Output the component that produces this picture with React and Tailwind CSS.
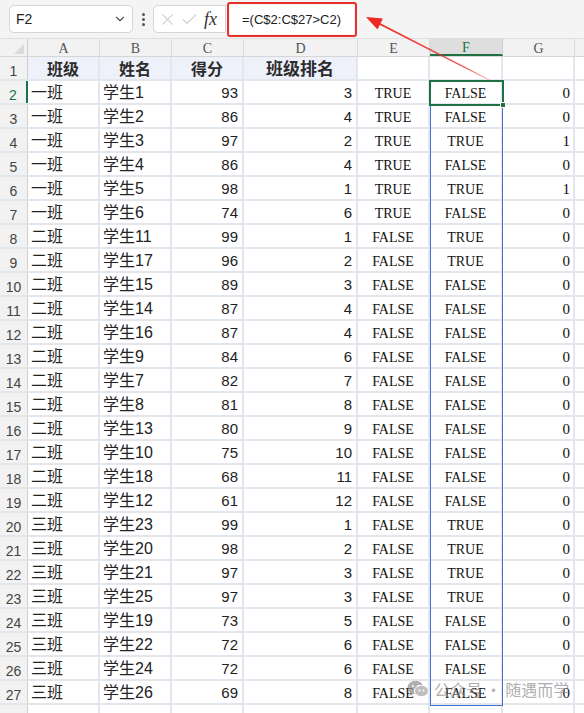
import { ChevronDown, X, Check } from "lucide-react";

const rows = [
  ["一班", "学生1", 93, 3, "TRUE", "FALSE", 0],
  ["一班", "学生2", 86, 4, "TRUE", "FALSE", 0],
  ["一班", "学生3", 97, 2, "TRUE", "TRUE", 1],
  ["一班", "学生4", 86, 4, "TRUE", "FALSE", 0],
  ["一班", "学生5", 98, 1, "TRUE", "TRUE", 1],
  ["一班", "学生6", 74, 6, "TRUE", "FALSE", 0],
  ["二班", "学生11", 99, 1, "FALSE", "TRUE", 0],
  ["二班", "学生17", 96, 2, "FALSE", "TRUE", 0],
  ["二班", "学生15", 89, 3, "FALSE", "FALSE", 0],
  ["二班", "学生14", 87, 4, "FALSE", "FALSE", 0],
  ["二班", "学生16", 87, 4, "FALSE", "FALSE", 0],
  ["二班", "学生9", 84, 6, "FALSE", "FALSE", 0],
  ["二班", "学生7", 82, 7, "FALSE", "FALSE", 0],
  ["二班", "学生8", 81, 8, "FALSE", "FALSE", 0],
  ["二班", "学生13", 80, 9, "FALSE", "FALSE", 0],
  ["二班", "学生10", 75, 10, "FALSE", "FALSE", 0],
  ["二班", "学生18", 68, 11, "FALSE", "FALSE", 0],
  ["二班", "学生12", 61, 12, "FALSE", "FALSE", 0],
  ["三班", "学生23", 99, 1, "FALSE", "TRUE", 0],
  ["三班", "学生20", 98, 2, "FALSE", "TRUE", 0],
  ["三班", "学生21", 97, 3, "FALSE", "TRUE", 0],
  ["三班", "学生25", 97, 3, "FALSE", "TRUE", 0],
  ["三班", "学生19", 73, 5, "FALSE", "FALSE", 0],
  ["三班", "学生22", 72, 6, "FALSE", "FALSE", 0],
  ["三班", "学生24", 72, 6, "FALSE", "FALSE", 0],
  ["三班", "学生26", 69, 8, "FALSE", "FALSE", 0],
];

const cell = "h-full shrink-0 border-r-2 border-[#e4e6ee] flex items-center";
const rowHead = "w-[28px] h-full shrink-0 bg-[#f2f2f2] border-r border-[#cfcfcf] flex justify-center pt-[4px] text-[14px] text-[#444]";
const serif = { fontFamily: "'Liberation Serif', serif" };

function ColumnHeader() {
  const letters = [
    ["A", "w-[72px]"],
    ["B", "w-[72px]"],
    ["C", "w-[72px]"],
    ["D", "w-[114px]"],
    ["E", "w-[72px]"],
  ];
  return (
    <div className="flex h-[18px] bg-[#f2f2f2] border-b border-[#d6d6d6] text-[14px] text-[#555] leading-none" style={serif}>
      <div className="w-[28px] shrink-0 border-r border-[#cfcfcf] relative">
        <div className="absolute right-[3px] bottom-[2px] w-0 h-0 border-l-[10px] border-l-transparent border-b-[10px] border-b-[#d9d9d9]" />
      </div>
      {letters.map(([l, w]) => (
        <div key={l} className={`${w} shrink-0 border-r border-[#dcdcdc] flex items-center justify-center pt-[2px]`}>{l}</div>
      ))}
      <div className="w-[73px] shrink-0 bg-[#dedede] border-r border-[#d0d0d0] border-b-2 border-b-[#1e7145] text-[#1e7145] flex items-center justify-center pt-[2px]">F</div>
      <div className="w-[72px] shrink-0 border-r border-[#dcdcdc] flex items-center justify-center pt-[2px]">G</div>
      <div className="flex-1" />
    </div>
  );
}

function DataRow({ n, r }) {
  const [cls, name, score, rank, e, f, g] = r;
  const active = n === 2;
  return (
    <div className="flex h-[24px] border-b-2 border-[#e4e6ee] text-[16px] text-[#222]">
      <div className={active ? "w-[28px] h-full shrink-0 bg-[#f2f2f2] border-r-2 border-[#1e7145] flex justify-center pt-[4px] text-[14px] text-[#1e7145]" : rowHead}>{n}</div>
      <div className={`${cell} w-[72px] pl-[3px] pt-[2px]`}>{cls}</div>
      <div className={`${cell} w-[72px] pl-[3px] pt-[2px]`}>{name}</div>
      <div className={`${cell} w-[72px] justify-end pr-[4px] pt-[2px] text-[15px]`}>{score}</div>
      <div className={`${cell} w-[114px] justify-end pr-[4px] pt-[2px] text-[15px]`}>{rank}</div>
      <div className={`${cell} w-[72px] justify-center text-[14px] pt-[3px] text-[#111]`} style={serif}>{e}</div>
      <div className={`${cell} w-[73px] justify-center text-[14px] pt-[3px] text-[#111]`} style={serif}>{f}</div>
      <div className={`${cell} w-[72px] justify-end pr-[3px] text-[15px] pt-[3px] text-[#111]`} style={serif}>{g}</div>
      <div className="flex-1" />
    </div>
  );
}

export default function App() {
  return (
    <div className="relative w-[584px] h-[713px] overflow-hidden bg-white" style={{ fontFamily: "'Liberation Sans', 'Noto Sans CJK SC', sans-serif" }}>
      {/* Formula bar */}
      <div className="h-[39px] bg-[#f4f4f4] border-b border-[#dedede] flex items-start pt-[5px] pl-[9px]">
        <div className="w-[124px] h-[28px] bg-white border border-[#d6d6d6] rounded-[5px] flex items-center justify-between pl-[6px] pr-[5px] text-[14px] text-[#222]">
          <span>F2</span>
          <ChevronDown className="w-[14px] h-[14px] text-[#555]" strokeWidth={2} />
        </div>
        <div className="w-[20px] h-[28px] flex flex-col items-center justify-center gap-[2px]">
          <span className="w-[3px] h-[3px] rounded-full bg-[#555]" />
          <span className="w-[3px] h-[3px] rounded-full bg-[#555]" />
          <span className="w-[3px] h-[3px] rounded-full bg-[#555]" />
        </div>
        <div className="w-[73px] h-[28px] bg-white border border-[#d6d6d6] rounded-l-[5px] flex items-center pl-[4px] gap-[3px]">
          <X className="w-[19px] h-[19px] text-[#c4c4c4]" strokeWidth={1.3} />
          <Check className="w-[19px] h-[19px] text-[#c4c4c4]" strokeWidth={1.3} />
          <span className="text-[18px] italic text-[#333] leading-none ml-[2px]" style={serif}>fx</span>
        </div>
        <div className="-mt-[3px] ml-[1px] w-[130px] h-[35px] border-2 border-[#e8302a] rounded-[3px] p-[1px]">
          <div className="h-full bg-white rounded-[3px] flex items-center pl-[12px] text-[13px] text-[#222]">=(C$2:C$27&gt;C2)</div>
        </div>
      </div>

      <ColumnHeader />

      {/* Header row */}
      <div className="flex h-[24px] border-b-2 border-[#e4e6ee] text-[16px] font-bold text-[#2b2b2b]" style={{ fontFamily: "'Noto Sans CJK SC', sans-serif" }}>
        <div className={rowHead} style={{ fontFamily: "'Liberation Sans', sans-serif", fontWeight: 400 }}>1</div>
        <div className={`${cell} w-[72px] justify-center bg-[#eef0fa]`}>班级</div>
        <div className={`${cell} w-[72px] justify-center bg-[#eef0fa]`}>姓名</div>
        <div className={`${cell} w-[72px] justify-center bg-[#eef0fa]`}>得分</div>
        <div className={`${cell} w-[114px] justify-center bg-[#eef0fa] text-[17px]`}>班级排名</div>
        <div className={`${cell} w-[72px]`} />
        <div className={`${cell} w-[73px]`} />
        <div className={`${cell} w-[72px]`} />
        <div className="flex-1" />
      </div>

      {rows.map((r, i) => (
        <DataRow key={i} n={i + 2} r={r} />
      ))}

      <div className="flex h-[24px]">
        <div className={rowHead}>28</div>
        <div className={`${cell} w-[72px]`} />
        <div className={`${cell} w-[72px]`} />
        <div className={`${cell} w-[72px]`} />
        <div className={`${cell} w-[114px]`} />
        <div className={`${cell} w-[72px]`} />
        <div className={`${cell} w-[73px]`} />
        <div className={`${cell} w-[72px]`} />
      </div>

      {/* Selection: F2:F27 range and active cell */}
      <div className="absolute left-[430px] top-[81px] w-[73px] h-[625px] border border-[#3f73d0] pointer-events-none" />
      <div className="absolute left-[429px] top-[80px] w-[75px] h-[26px] border-2 border-[#1e7145] pointer-events-none">
        <div className="absolute -right-[4px] -bottom-[4px] w-[6px] h-[6px] bg-[#1e7145] border border-white" />
      </div>

      {/* Callout arrow */}
      <svg className="absolute left-0 top-0 pointer-events-none" width="584" height="120">
        <defs>
          <linearGradient id="arrowFade" x1="378" y1="23" x2="493" y2="82" gradientUnits="userSpaceOnUse">
            <stop offset="0" stopColor="#ee2a22" stopOpacity="1" />
            <stop offset="0.75" stopColor="#ee2a22" stopOpacity="0.8" />
            <stop offset="1" stopColor="#ee2a22" stopOpacity="0.15" />
          </linearGradient>
        </defs>
        <polygon points="377,21.5 379,24.5 493,82.5 493.6,81.5" fill="url(#arrowFade)" />
        <polygon points="366,17 377.5,29.5 382.9,18.5" fill="#ee2a22" />
      </svg>

      {/* Watermark */}
      <div className="absolute left-[407px] top-[680px] flex items-center gap-[5px] whitespace-nowrap text-[#8e8e8e] opacity-70 pointer-events-none" style={{ fontFamily: "'Noto Sans CJK SC', sans-serif" }}>
        <svg width="22" height="18" viewBox="0 0 22 18" className="shrink-0">
          <ellipse cx="8.5" cy="7.5" rx="8" ry="6.8" fill="#8e8e8e" />
          <path d="M3.5 12.5 L2.5 16 L6.8 13.8 Z" fill="#8e8e8e" />
          <ellipse cx="14.5" cy="11" rx="7" ry="5.8" fill="#a5a5a5" stroke="white" strokeWidth="1" />
          <circle cx="6" cy="6" r="1" fill="white" />
          <circle cx="11" cy="6" r="1" fill="white" />
          <circle cx="12.5" cy="10.5" r="0.9" fill="white" />
          <circle cx="16.5" cy="10.5" r="0.9" fill="white" />
        </svg>
        <span className="text-[16px] leading-none">公众号 · 随遇而学</span>
      </div>
    </div>
  );
}
